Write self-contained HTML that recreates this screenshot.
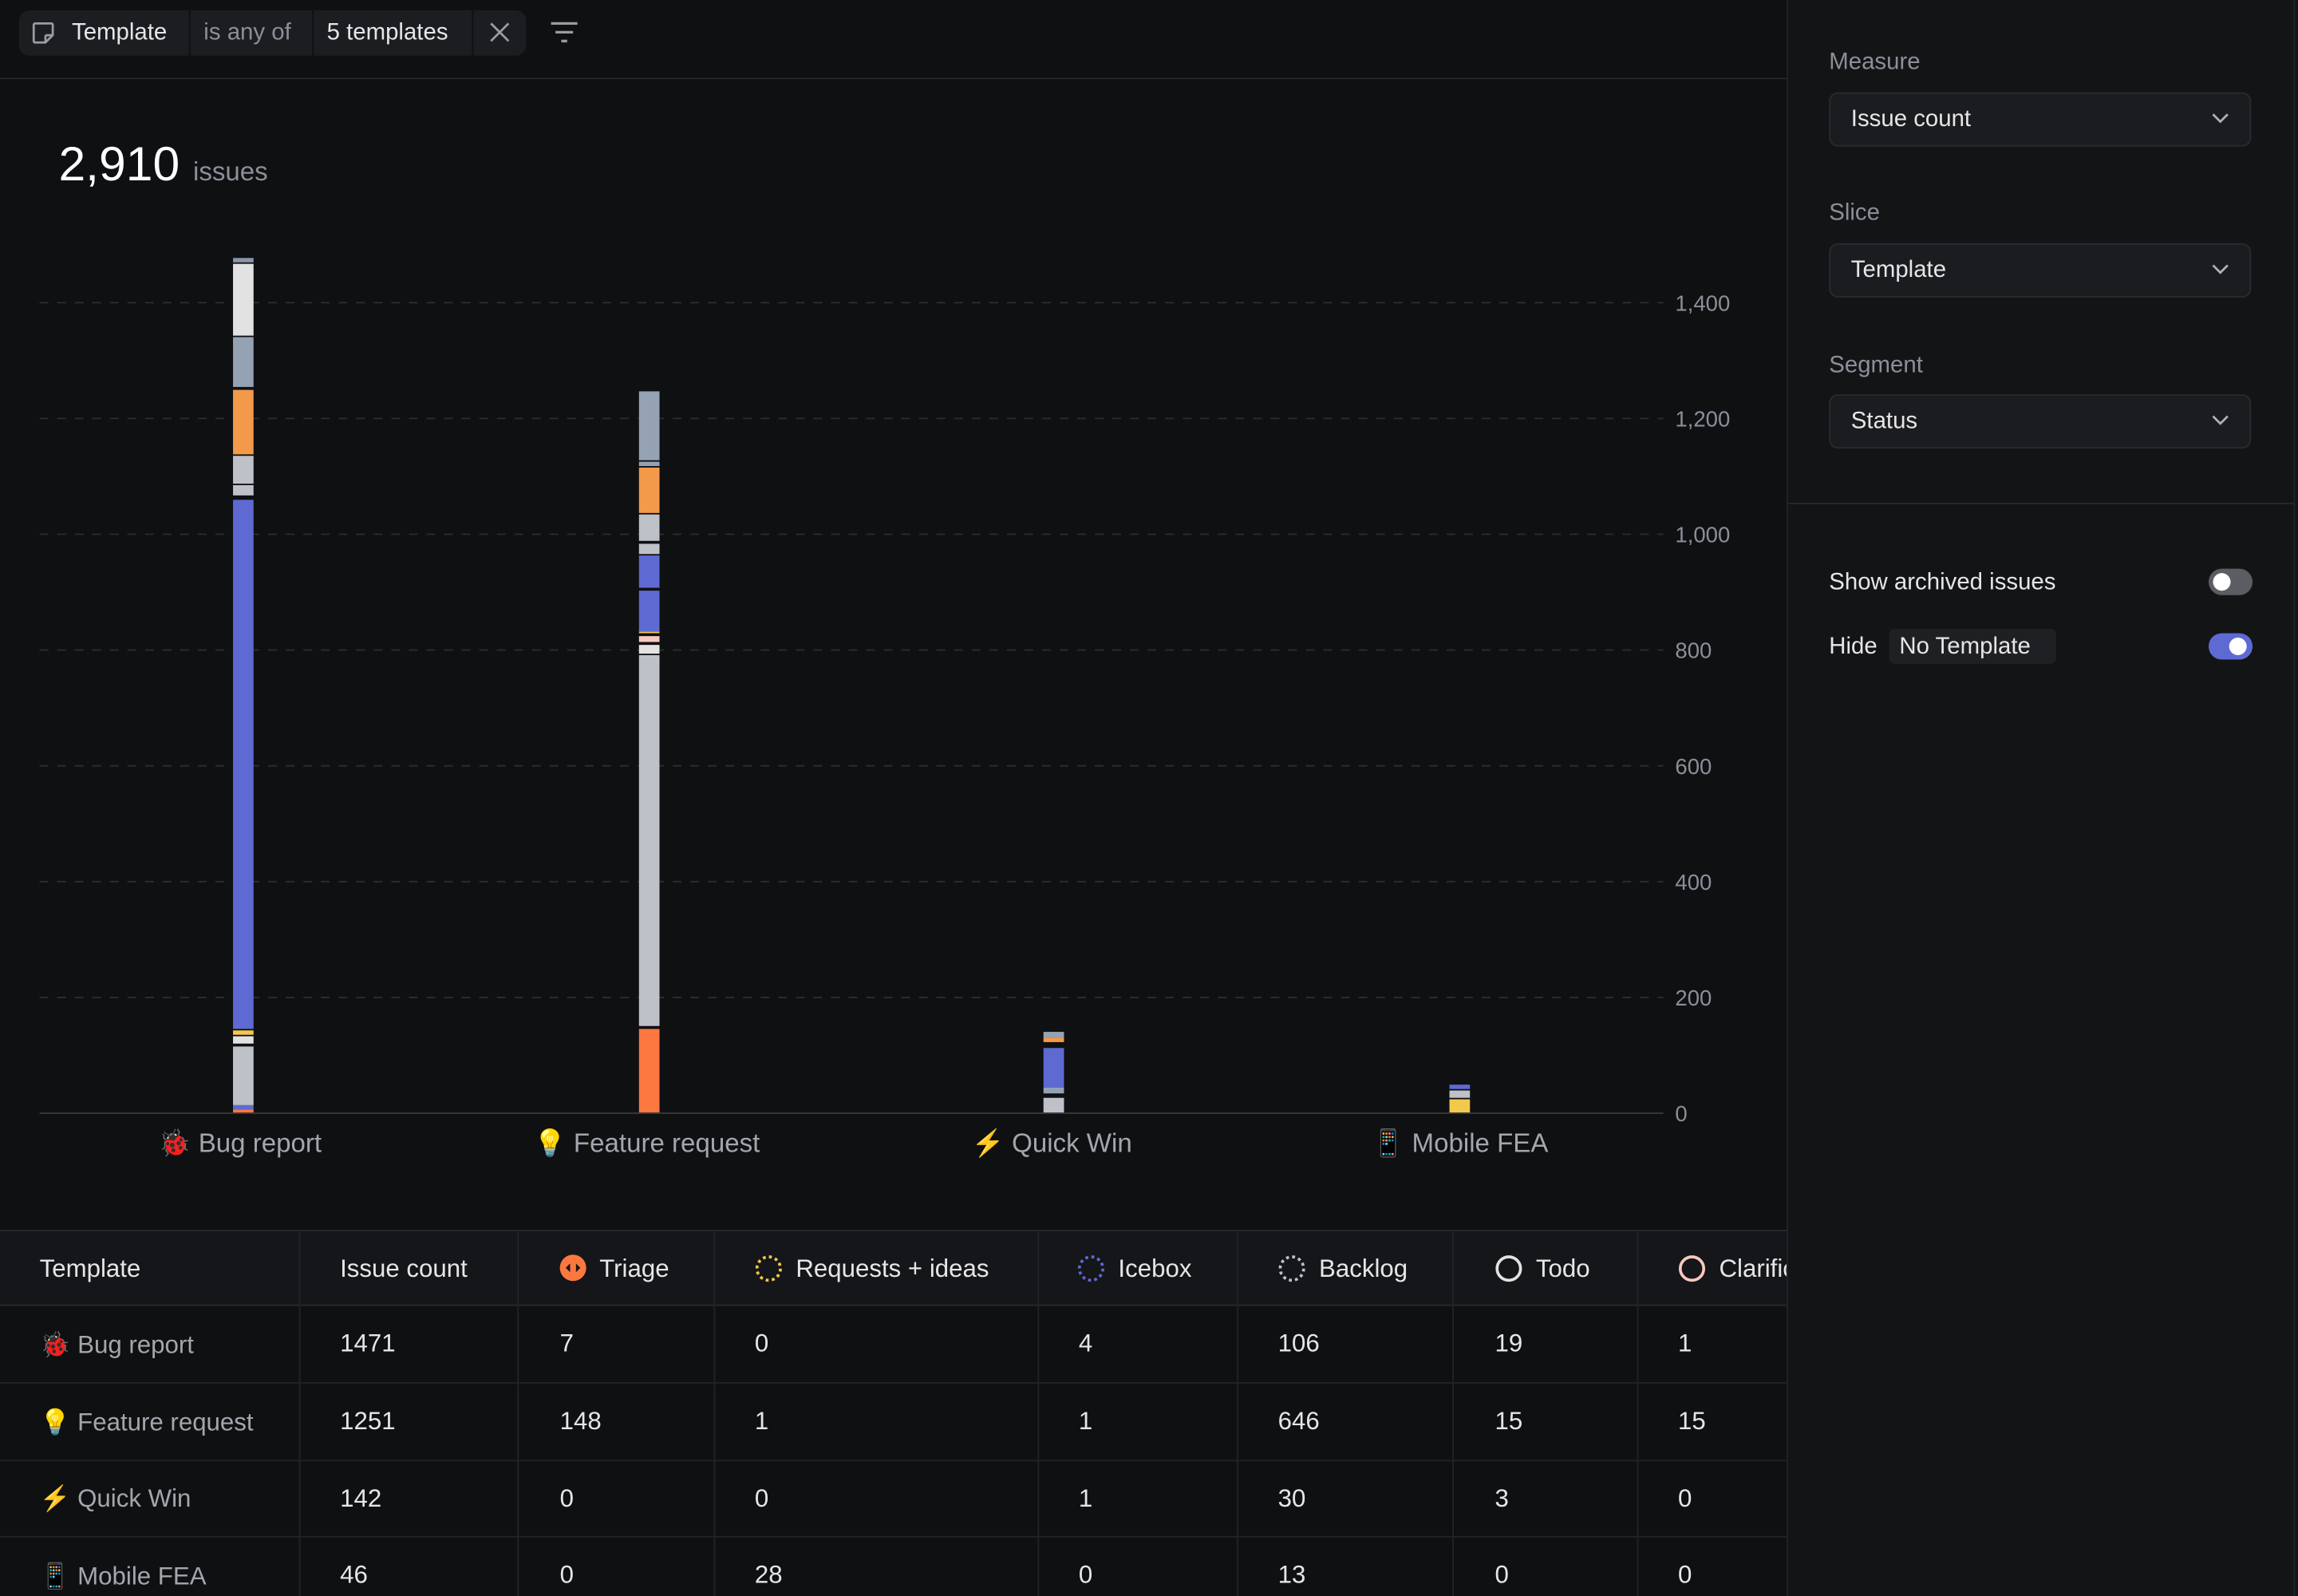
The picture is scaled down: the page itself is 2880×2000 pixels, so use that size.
<!DOCTYPE html>
<html><head><meta charset="utf-8"><style>
html,body{margin:0;padding:0;background:#0f1012;overflow:hidden;width:2880px;height:1999px}
#w{position:absolute;left:0;top:0;width:1568px;height:1089px;transform:scale(1.836735);transform-origin:0 0;font-family:"Liberation Sans",sans-serif;color:#e2e3e6;background:#0f1012}
.a{position:absolute}
.seg{position:absolute;left:159px;width:14px}
.t{position:absolute;font-size:17px;color:#e6e6e8;white-space:nowrap}
.lbl{position:absolute;font-size:16px;color:#8a8f98}
.sel{position:absolute;left:1248px;width:288px;height:37px;background:#1b1c20;border:1px solid #2a2b30;border-radius:6px;box-sizing:border-box}
.sel span{position:absolute;left:14px;top:9px;font-size:16px;color:#e6e6e8}
.sel svg{position:absolute;right:14px;top:13px}
.vl{position:absolute;top:839px;height:250px;width:1px;background:#222327}
.hl{position:absolute;left:0;width:1219px;height:1px;background:#222327}
</style></head><body><div id="w">
<div class="a" style="left:0;top:53px;width:1219px;height:1px;background:#25262a"></div>
<div class="a" style="left:13px;top:7px;width:346px;height:31px;background:#1c1d21;border-radius:7px"></div>
<div class="a" style="left:129px;top:7px;width:1px;height:31px;background:#0f1012"></div>
<div class="a" style="left:213px;top:7px;width:1px;height:31px;background:#0f1012"></div>
<div class="a" style="left:322px;top:7px;width:1px;height:31px;background:#0f1012"></div>
<svg class="a" style="left:21px;top:14px" width="17" height="17" viewBox="0 0 17 17"><path d="M3 2h11a1 1 0 0 1 1 1v7l-5 5H3a1 1 0 0 1-1-1V3a1 1 0 0 1 1-1z M15 10h-4a1 1 0 0 0-1 1v4" fill="none" stroke="#9a9ca3" stroke-width="1.5"/></svg>
<div class="t" style="left:49px;top:14px;font-size:16px">Template</div>
<div class="t" style="left:139px;top:14px;font-size:16px;color:#8a8f98">is any of</div>
<div class="t" style="left:223px;top:14px;font-size:16px">5 templates</div>
<svg class="a" style="left:334px;top:15px" width="14" height="14"><path d="M1 1l12 12M13 1L1 13" stroke="#9a9ca3" stroke-width="1.5"/></svg>
<svg class="a" style="left:375px;top:14px" width="20" height="16"><path d="M1 2h18M4 8h12M8 14h4" stroke="#9a9ca3" stroke-width="1.8"/></svg>

<div class="a" style="left:40px;top:93px;font-size:33px;color:#fff">2,910 <span style="font-size:18px;color:#8a8f98">issues</span></div>

<svg class="a" style="left:0;top:0" width="1219" height="800">
<g stroke="#2c2d31" stroke-width="1" stroke-dasharray="6 6">
<line x1="27" y1="206.5" x2="1135" y2="206.5"/><line x1="27" y1="285.5" x2="1135" y2="285.5"/><line x1="27" y1="364.5" x2="1135" y2="364.5"/><line x1="27" y1="443.5" x2="1135" y2="443.5"/><line x1="27" y1="522.5" x2="1135" y2="522.5"/><line x1="27" y1="601.5" x2="1135" y2="601.5"/><line x1="27" y1="680.5" x2="1135" y2="680.5"/>
</g>
<line x1="27" y1="759.5" x2="1135" y2="759.5" stroke="#3a3b40"/>
<g font-family="Liberation Sans" font-size="15" fill="#8a8f98">
<text x="1143" y="212">1,400</text><text x="1143" y="291">1,200</text><text x="1143" y="370">1,000</text><text x="1143" y="449">800</text><text x="1143" y="528">600</text><text x="1143" y="607">400</text><text x="1143" y="686">200</text><text x="1143" y="765">0</text>
</g>
</svg>
<div class="seg" style="top:176px;height:3px;background:#8a95a8"></div>
<div class="seg" style="top:180px;height:49px;background:#e2e2e2"></div>
<div class="seg" style="top:230px;height:34px;background:#95a2b3"></div>
<div class="seg" style="top:266px;height:44px;background:#f2994a"></div>
<div class="seg" style="top:311px;height:19px;background:#bec2c8"></div>
<div class="seg" style="top:331px;height:7px;background:#bec2c8"></div>
<div class="seg" style="top:341px;height:361px;background:#5e6ad2"></div>
<div class="seg" style="top:703px;height:3px;background:#f2c94c"></div>
<div class="seg" style="top:707px;height:5px;background:#e2e2e2"></div>
<div class="seg" style="top:714px;height:40px;background:#bec2c8"></div>
<div class="seg" style="top:754px;height:3px;background:#5e6ad2"></div>
<div class="seg" style="top:757px;height:2px;background:#fc7840"></div>
<div class="seg" style="left:436px;top:267px;height:47px;background:#95a2b3"></div>
<div class="seg" style="left:436px;top:315px;height:3px;background:#95a2b3"></div>
<div class="seg" style="left:436px;top:319px;height:31px;background:#f2994a"></div>
<div class="seg" style="left:436px;top:351px;height:18px;background:#bec2c8"></div>
<div class="seg" style="left:436px;top:371px;height:7px;background:#bec2c8"></div>
<div class="seg" style="left:436px;top:379px;height:22px;background:#5e6ad2"></div>
<div class="seg" style="left:436px;top:403px;height:28px;background:#5e6ad2"></div>
<div class="seg" style="left:436px;top:431px;height:1px;background:#f2c94c"></div>
<div class="seg" style="left:436px;top:434px;height:4px;background:#f7c8c1"></div>
<div class="seg" style="left:436px;top:440px;height:6px;background:#e2e2e2"></div>
<div class="seg" style="left:436px;top:447px;height:253px;background:#bec2c8"></div>
<div class="seg" style="left:436px;top:702px;height:57px;background:#fc7840"></div>
<div class="seg" style="left:712px;top:704px;height:4px;background:#95a2b3"></div>
<div class="seg" style="left:712px;top:708px;height:3px;background:#f2994a"></div>
<div class="seg" style="left:712px;top:715px;height:27px;background:#5e6ad2"></div>
<div class="seg" style="left:712px;top:742px;height:4px;background:#95a2b3"></div>
<div class="seg" style="left:712px;top:749px;height:10px;background:#bec2c8"></div>
<div class="seg" style="left:989px;top:740px;height:3px;background:#5e6ad2"></div>
<div class="seg" style="left:989px;top:744px;height:5px;background:#bec2c8"></div>
<div class="seg" style="left:989px;top:750px;height:9px;background:#f2c94c"></div>
<div class="t" style="left:108px;top:770px;font-size:18px;color:#a4a6ad">🐞 Bug report</div>
<div class="t" style="left:364px;top:770px;font-size:18px;color:#a4a6ad">💡 Feature request</div>
<div class="t" style="left:663px;top:770px;font-size:18px;color:#a4a6ad">⚡ Quick Win</div>
<div class="t" style="left:936px;top:770px;font-size:18px;color:#a4a6ad">📱 Mobile FEA</div>

<div class="a" style="left:0;top:839px;width:1219px;height:51px;background:#151619"></div>
<div class="hl" style="top:839px;background:#2a2b2f"></div>
<div class="hl" style="top:890px;background:#2a2b2f"></div>
<div class="hl" style="top:943px"></div><div class="hl" style="top:996px"></div><div class="hl" style="top:1048px"></div>
<div class="vl" style="left:204px"></div><div class="vl" style="left:353px"></div><div class="vl" style="left:487px"></div><div class="vl" style="left:708px"></div><div class="vl" style="left:844px"></div><div class="vl" style="left:991px"></div><div class="vl" style="left:1117px"></div>
<div class="t" style="left:27px;top:856px">Template</div>
<div class="t" style="left:232px;top:856px">Issue count</div>
<svg class="a" style="left:381px;top:855px" width="20" height="20"><circle cx="10" cy="10" r="9" fill="#fc7840"/><path d="M5 10l3-3v6zM15 10l-3-3v6z" fill="#151619"/></svg>
<div class="t" style="left:409px;top:856px">Triage</div>
<svg class="a" style="left:515px;top:856px" width="19" height="19"><circle cx="9.5" cy="9.5" r="8" fill="none" stroke="#f2c94c" stroke-width="2" stroke-dasharray="2 2.2"/></svg>
<div class="t" style="left:543px;top:856px">Requests + ideas</div>
<svg class="a" style="left:735px;top:856px" width="19" height="19"><circle cx="9.5" cy="9.5" r="8" fill="none" stroke="#5e6ad2" stroke-width="2" stroke-dasharray="2 2.2"/></svg>
<div class="t" style="left:763px;top:856px">Icebox</div>
<svg class="a" style="left:872px;top:856px" width="19" height="19"><circle cx="9.5" cy="9.5" r="8" fill="none" stroke="#bec2c8" stroke-width="2" stroke-dasharray="2 2.2"/></svg>
<div class="t" style="left:900px;top:856px">Backlog</div>
<svg class="a" style="left:1020px;top:856px" width="19" height="19"><circle cx="9.5" cy="9.5" r="8" fill="none" stroke="#e2e2e2" stroke-width="2"/></svg>
<div class="t" style="left:1048px;top:856px">Todo</div>
<svg class="a" style="left:1145px;top:856px" width="19" height="19"><circle cx="9.5" cy="9.5" r="8" fill="none" stroke="#f7c8c1" stroke-width="2"/></svg>
<div class="t" style="left:1173px;top:856px">Clarification</div>

<div class="t" style="left:27px;top:908px;color:#a4a6ad">🐞 Bug report</div>
<div class="t" style="left:232px;top:907px">1471</div><div class="t" style="left:382px;top:907px">7</div><div class="t" style="left:515px;top:907px">0</div><div class="t" style="left:736px;top:907px">4</div><div class="t" style="left:872px;top:907px">106</div><div class="t" style="left:1020px;top:907px">19</div><div class="t" style="left:1145px;top:907px">1</div>
<div class="t" style="left:27px;top:961px;color:#a4a6ad">💡 Feature request</div>
<div class="t" style="left:232px;top:960px">1251</div><div class="t" style="left:382px;top:960px">148</div><div class="t" style="left:515px;top:960px">1</div><div class="t" style="left:736px;top:960px">1</div><div class="t" style="left:872px;top:960px">646</div><div class="t" style="left:1020px;top:960px">15</div><div class="t" style="left:1145px;top:960px">15</div>
<div class="t" style="left:27px;top:1013px;color:#a4a6ad">⚡ Quick Win</div>
<div class="t" style="left:232px;top:1013px">142</div><div class="t" style="left:382px;top:1013px">0</div><div class="t" style="left:515px;top:1013px">0</div><div class="t" style="left:736px;top:1013px">1</div><div class="t" style="left:872px;top:1013px">30</div><div class="t" style="left:1020px;top:1013px">3</div><div class="t" style="left:1145px;top:1013px">0</div>
<div class="t" style="left:27px;top:1066px;color:#a4a6ad">📱 Mobile FEA</div>
<div class="t" style="left:232px;top:1065px">46</div><div class="t" style="left:382px;top:1065px">0</div><div class="t" style="left:515px;top:1065px">28</div><div class="t" style="left:736px;top:1065px">0</div><div class="t" style="left:872px;top:1065px">13</div><div class="t" style="left:1020px;top:1065px">0</div><div class="t" style="left:1145px;top:1065px">0</div>

<div class="a" style="left:1219px;top:0;width:349px;height:1089px;background:#131416;border-left:1px solid #232428"></div>
<div class="a" style="left:1220px;top:343px;width:345px;height:1px;background:#27282c"></div>
<div class="a" style="left:1565px;top:0;width:1px;height:1089px;background:#232428"></div>
<div class="lbl" style="left:1248px;top:34px">Measure</div>
<div class="sel" style="top:63px"><span>Issue count</span><svg width="12" height="8"><path d="M1 1l5 5 5-5" fill="none" stroke="#b0b2b8" stroke-width="1.5"/></svg></div>
<div class="lbl" style="left:1248px;top:137px">Slice</div>
<div class="sel" style="top:166px"><span>Template</span><svg width="12" height="8"><path d="M1 1l5 5 5-5" fill="none" stroke="#b0b2b8" stroke-width="1.5"/></svg></div>
<div class="lbl" style="left:1248px;top:241px">Segment</div>
<div class="sel" style="top:269px"><span>Status</span><svg width="12" height="8"><path d="M1 1l5 5 5-5" fill="none" stroke="#b0b2b8" stroke-width="1.5"/></svg></div>
<div class="t" style="left:1248px;top:389px;font-size:16px">Show archived issues</div>
<div class="a" style="left:1507px;top:388px;width:30px;height:18px;border-radius:9px;background:#5c5d62"></div>
<div class="a" style="left:1510px;top:391px;width:12px;height:12px;border-radius:6px;background:#fff"></div>
<div class="t" style="left:1248px;top:433px;font-size:16px">Hide</div>
<div class="a" style="left:1289px;top:429px;width:114px;height:24px;border-radius:4px;background:#1f2024"></div>
<div class="t" style="left:1296px;top:433px;font-size:16px">No Template</div>
<div class="a" style="left:1507px;top:432px;width:30px;height:18px;border-radius:9px;background:#5e6ad2"></div>
<div class="a" style="left:1521px;top:435px;width:12px;height:12px;border-radius:6px;background:#fff"></div>
</div></body></html>
